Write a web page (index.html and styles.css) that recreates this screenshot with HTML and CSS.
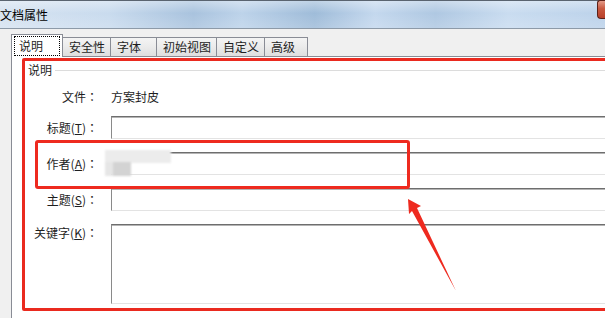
FILE: index.html
```html
<!DOCTYPE html>
<html lang="zh-CN">
<head>
<meta charset="utf-8">
<title>文档属性</title>
<link rel="stylesheet" href="styles.css">
</head>
<body>
<div class="window">
  <div class="titlebar">
    <span class="title">文档属性</span>
    <span class="close"></span>
  </div>
  <div class="dialog">
    <div class="tabs">
      <div class="tab tab-active"><span class="focus">说明</span></div>
      <div class="tab">安全性</div>
      <div class="tab">字体</div>
      <div class="tab">初始视图</div>
      <div class="tab">自定义</div>
      <div class="tab tab-narrow">高级</div>
    </div>
    <div class="panel">
      <div class="mark">
        <div class="group-head"><span class="group-label">说明</span></div>
        <div class="rows">
          <div class="row row-file">
            <span class="label">文件<span class="colon">：</span></span>
            <span class="value">方案封皮</span>
          </div>
          <div class="row">
            <span class="label">标题(<u>T</u>)<span class="colon">：</span></span>
            <div class="field"></div>
          </div>
          <div class="row">
            <span class="label">作者(<u>A</u>)<span class="colon">：</span></span>
            <div class="field"></div>
          </div>
          <div class="row">
            <span class="label">主题(<u>S</u>)<span class="colon">：</span></span>
            <div class="field"></div>
          </div>
          <div class="row row-top">
            <span class="label">关键字(<u>K</u>)<span class="colon">：</span></span>
            <div class="field field-area"></div>
          </div>
        </div>
      </div>
    </div>
  </div>
  <div class="blur"><span class="blur-a"></span><span class="blur-b"></span></div>
  <div class="highlight"></div>
  <svg class="arrow" width="605" height="318" viewBox="0 0 605 318">
    <polygon points="408,199 421,206 417,208 456,291 412,211 409,214" fill="#ee2a1f"/>
  </svg>
</div>
</body>
</html>
```
FILE: styles.css
```css
html, body {
  margin: 0;
  padding: 0;
}
body {
  width: 605px;
  height: 318px;
  overflow: hidden;
  background: #f0f0f0;
  font-family: "Noto Sans CJK SC", "Microsoft YaHei", sans-serif;
  font-size: 12px;
  color: #1e1e1e;
}
.window {
  position: relative;
  width: 605px;
  height: 318px;
  overflow: hidden;
}
.titlebar {
  border-top: 1px solid #5a6470;
  border-bottom: 1px solid #8d9aa8;
  box-sizing: border-box;
  height: 29px;
  display: flex;
  align-items: center;
  justify-content: space-between;
  background:
    linear-gradient(180deg, rgba(255,255,255,0.35) 0%, rgba(255,255,255,0) 45%, rgba(255,255,255,0.15) 100%),
    linear-gradient(90deg, #d6e3f1 0%, #c9dbee 18%, #a9c3de 32%, #bdd3ea 40%, #9fbcd9 52%, #c4d8ee 62%, #afc8e2 72%, #c9dcf0 84%, #bcd2ea 100%);
}
.title {
  line-height: 16px;
  color: #000;
}
.close {
  align-self: flex-start;
  width: 8px;
  height: 19px;
  margin-top: -1px;
  box-sizing: border-box;
  border: 1px solid #5b2018;
  border-right: 0;
  border-radius: 3px 0 0 4px;
  background: linear-gradient(180deg, #e39a88 0%, #c8583f 45%, #b8402a 100%);
}
.dialog {
  padding-left: 11px;
}
.tabs {
  height: 27px;
  display: flex;
  align-items: flex-end;
  position: relative;
  z-index: 2;
}
.tab {
  box-sizing: border-box;
  height: 19px;
  min-width: 47px;
  padding: 0 5px 0 6px;
  margin-left: -1px;
  border: 1px solid #898c95;
  border-bottom: 0;
  background: linear-gradient(180deg, #f4f4f4 0%, #ebebeb 50%, #dedede 100%);
  line-height: 17px;
  white-space: nowrap;
}
.tab-narrow {
  min-width: 44px;
}
.tab-active {
  margin-left: 0;
  width: 52px;
  min-width: 52px;
  height: 23px;
  margin-bottom: -1px;
  padding: 1px 0 0 2px;
  background: #fff;
  position: relative;
  z-index: 3;
}
.focus {
  display: block;
  height: 20px;
  width: 46px;
  box-sizing: border-box;
  border: 1px dotted #000;
  padding-left: 4px;
  line-height: 17px;
}
.panel {
  background: #fff;
  border-top: 1px solid #898c95;
  border-left: 1px solid #898c95;
  height: 262px;
  padding-top: 1px;
  padding-left: 10px;
}
.mark {
  width: 590px;
  border: 3px solid #ea2a1f;
  border-radius: 2px;
  padding-bottom: 4px;
}
.group-head {
  height: 16px;
  margin-top: 1px;
  display: flex;
  align-items: center;
}
.group-head::after {
  content: "";
  flex: 1;
  height: 1px;
  background: #dcdcdc;
  margin-left: 3px;
}
.group-label {
  margin-left: 3px;
  line-height: 16px;
}
.rows {
  margin-top: 8px;
  display: flex;
  flex-direction: column;
  gap: 13px;
}
.row {
  display: flex;
  align-items: center;
  gap: 13px;
  height: 23px;
}
.row-file {
  height: 22px;
  margin-bottom: -5px;
}
.row-top {
  align-items: flex-start;
  height: auto;
}
.row-top .label {
  padding-top: 1px;
}
.label {
  width: 73px;
  flex: none;
  text-align: right;
  line-height: 16px;
  white-space: nowrap;
}
.label u {
  text-decoration: underline;
  text-underline-offset: 1px;
}
.colon {
  font-family: "Noto Sans CJK TC", sans-serif;
  display: inline-block;
  width: 12px;
  text-align: center;
}
.value {
  line-height: 16px;
}
.field {
  flex: 1;
  height: 23px;
  box-sizing: border-box;
  border: 1px solid;
  border-color: #6e6e6e #e3e3e3 #e3e3e3 #8a8a8a;
  box-shadow: inset 0 1px 0 #b4b4b4;
  background: #fff;
}
.field-area {
  height: 80px;
}
.blur {
  position: absolute;
  left: 105px;
  top: 150px;
  width: 66px;
  height: 26px;
  filter: blur(1.2px);
}
.blur-a {
  position: absolute;
  left: 0;
  top: 0;
  width: 66px;
  height: 13px;
  background: #ececec;
}
.blur-b {
  position: absolute;
  left: 0;
  top: 12px;
  width: 26px;
  height: 14px;
  background: linear-gradient(90deg, #e6e6e6 0 30%, #d3d3d3 30% 100%);
}
.highlight {
  position: absolute;
  left: 35px;
  top: 140px;
  width: 369px;
  height: 43px;
  border: 3px solid #ee2a1f;
  border-radius: 3px;
}
.arrow {
  position: absolute;
  left: 0;
  top: 0;
}
```
